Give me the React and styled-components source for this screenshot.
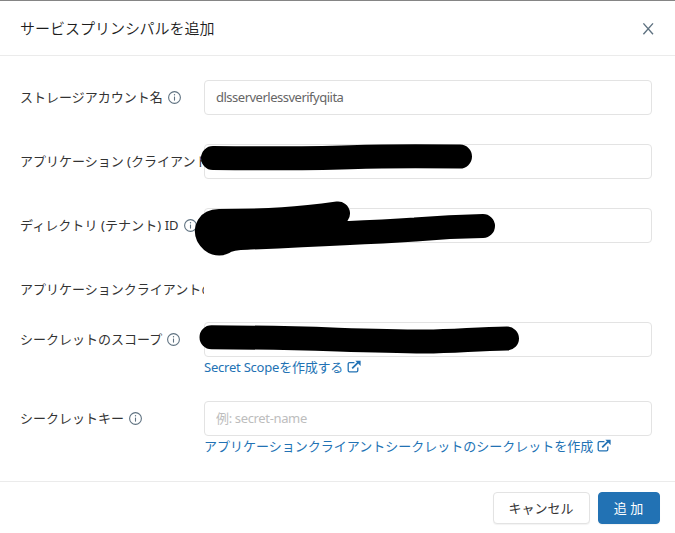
import React from "react";
import styled, { createGlobalStyle } from "styled-components";

const Global = createGlobalStyle`
  *, *::before, *::after { box-sizing: border-box; }
  body {
    margin: 0;
    background: #fff;
    color: #333;
    font-family: "Noto Sans", "Noto Sans CJK JP", sans-serif;
    font-size: 13px;
    line-height: 20px;
    overflow: hidden;
  }
`;

const Dialog = styled.div`
  display: flex;
  flex-direction: column;
  width: 675px;
  height: 533px;
  border-top: 1px solid #858585;
  background: #fff;
`;

const Header = styled.header`
  display: flex;
  align-items: center;
  justify-content: space-between;
  height: 55px;
  padding: 0 20px;
  border-bottom: 1px solid #ebebeb;
`;

const Title = styled.h1`
  margin: 0;
  font-family: "Noto Sans CJK JP", sans-serif;
  font-size: 15px;
  line-height: 22px;
  font-weight: 350;
  color: #1c1c1c;
`;

const CloseButton = styled.button`
  display: flex;
  padding: 0;
  border: 0;
  margin-top: 2px;
  background: none;
  color: #5f7281;
`;

const Form = styled.form`
  flex: 1;
  padding: 24px 23px 0 20px;
`;

const Row = styled.div`
  display: grid;
  grid-template-columns: 184px 448px;
  height: ${(p) => p.$height}px;
`;

const Label = styled.label`
  display: flex;
  align-items: center;
  gap: 5px;
  height: 35px;
  padding-bottom: 2px;
  overflow: hidden;
  white-space: pre;
  svg { flex: none; color: #5f7281; }
`;

const LabelText = styled.span`
  letter-spacing: ${(p) => p.$tracking || 0}px;
`;

const Field = styled.div`
  position: relative;
  min-width: 0;
`;

const Input = styled.input`
  display: block;
  width: 100%;
  height: 35px;
  padding: 0 11px 1px;
  border: 1px solid #e3e3e3;
  border-radius: 4px;
  background: #fff;
  color: #666;
  font: inherit;
  letter-spacing: ${(p) => p.$tracking || 0}px;
  outline: none;
  &::placeholder { color: #bdbdbd; opacity: 1; }
`;

const Link = styled.a`
  display: flex;
  align-items: center;
  gap: 4px;
  width: max-content;
  color: #2272b4;
  white-space: nowrap;
`;

const LinkText = styled.span`
  letter-spacing: ${(p) => p.$tracking || 0}px;
`;

const Redaction = styled.svg`
  position: absolute;
  left: -14px;
  top: -10px;
  width: 340px;
  height: 60px;
  pointer-events: none;
  fill: none;
  stroke: #000;
  stroke-linecap: round;
  stroke-linejoin: round;
`;

const Footer = styled.footer`
  display: flex;
  justify-content: flex-end;
  gap: 8px;
  height: 52px;
  padding: 10px 15px 0 0;
  border-top: 1px solid #ebebeb;
`;

const Button = styled.button`
  width: ${(p) => (p.$primary ? 62 : 97)}px;
  height: 32px;
  padding: 0 1px 0 0;
  border: 1px solid ${(p) => (p.$primary ? "#2272b4" : "#e3e3e3")};
  border-radius: 4px;
  background: ${(p) => (p.$primary ? "#2272b4" : "#fff")};
  color: ${(p) => (p.$primary ? "#fff" : "#333")};
  font: inherit;
  box-shadow: 0 1px 1px rgba(0, 0, 0, 0.05);
  white-space: pre;
`;

const InfoIcon = () => (
  <svg width="14" height="14" viewBox="0 0 14 14" fill="none">
    <circle cx="6.5" cy="7.5" r="5.9" stroke="currentColor" strokeWidth="1.1" />
    <path d="M6.5 6.6v4" stroke="currentColor" strokeWidth="1.1" />
    <circle cx="6.5" cy="4.7" r=".7" fill="currentColor" />
  </svg>
);

const ExternalIcon = () => (
  <svg width="14" height="14" viewBox="0 0 14 14" fill="none" stroke="currentColor">
    <path d="M7.4 2.6H2.5a1.3 1.3 0 0 0-1.3 1.3v6.7a1.3 1.3 0 0 0 1.3 1.3h7a1.3 1.3 0 0 0 1.3-1.3V7.4" strokeWidth="1.3" />
    <path d="M5.2 8.4l6-6" strokeWidth="1.8" />
    <path d="M8.4.8h5.2v5.2z" fill="currentColor" stroke="none" />
  </svg>
);

export default function App() {
  return (
    <>
      <Global />
      <Dialog role="dialog">
        <Header>
          <Title>サービスプリンシパルを追加</Title>
          <CloseButton aria-label="閉じる">
            <svg width="14" height="14" viewBox="0 0 14 14" fill="none" stroke="currentColor" strokeWidth="1.4">
              <path d="M2.4 1.4l9.6 10.8M12 1.4L2.4 12.2" />
            </svg>
          </CloseButton>
        </Header>
        <Form>
          <Row $height={64}>
            <Label><LabelText>ストレージアカウント名</LabelText><InfoIcon /></Label>
            <Field><Input defaultValue="dlsserverlessverifyqiita" $tracking={-0.5} /></Field>
          </Row>
          <Row $height={64}>
            <Label><LabelText>アプリケーション (クライアント) ID</LabelText></Label>
            <Field>
              <Input />
              <Redaction viewBox="190 134 340 60" strokeWidth="24">
                <path d="M213 158Q300 158.8 350 157.2T460 156.6" />
              </Redaction>
            </Field>
          </Row>
          <Row $height={64}>
            <Label><LabelText $tracking={0.07}>ディレクトリ (テナント) ID</LabelText><InfoIcon /></Label>
            <Field>
              <Input />
              <Redaction viewBox="190 198 340 60" strokeWidth="24">
                <path d="M338 213.5C298 219 270 221 219 221C208 221 205 229 208 236C212 243 219 246 226 241Q232 238.5 240 238C300 235.5 350 233.5 415 229.5Q450 226.5 483 226" />
                <path d="M214 228L240 231L330 224L338 230" />
              </Redaction>
            </Field>
          </Row>
          <Row $height={50}>
            <Label><LabelText>アプリケーションクライアントのシークレット</LabelText></Label>
          </Row>
          <Row $height={79}>
            <Label><LabelText>シークレットのスコープ</LabelText><InfoIcon /></Label>
            <Field>
              <Input />
              <Link><LinkText $tracking={-0.22}>Secret Scopeを作成する</LinkText><ExternalIcon /></Link>
              <Redaction viewBox="190 312 340 60" strokeWidth="24">
                <path d="M211.5 337.2C310 337.5 350 341 425 341.6C455 341.5 475 339 507 338.5" />
              </Redaction>
            </Field>
          </Row>
          <Row $height={79}>
            <Label><LabelText>シークレットキー</LabelText><InfoIcon /></Label>
            <Field>
              <Input placeholder="例: secret-name" $tracking={-0.35} />
              <Link><LinkText>アプリケーションクライアントシークレットのシークレットを作成</LinkText><ExternalIcon /></Link>
            </Field>
          </Row>
        </Form>
        <Footer>
          <Button>キャンセル</Button>
          <Button $primary>追 加</Button>
        </Footer>
      </Dialog>
    </>
  );
}
